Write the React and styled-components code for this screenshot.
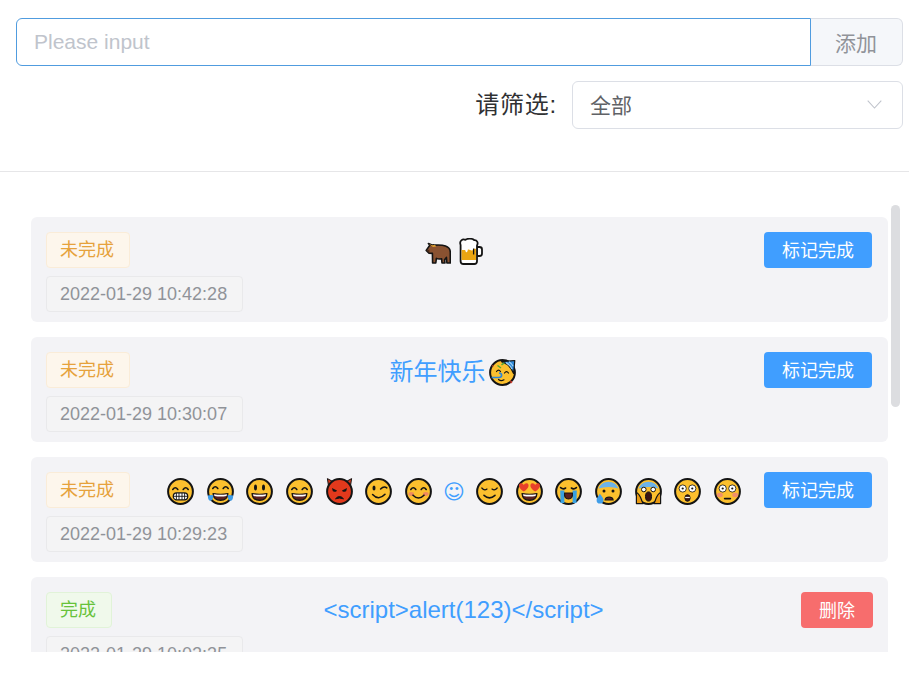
import React from "react";
import styled, { createGlobalStyle } from "styled-components";

const Global = createGlobalStyle`
  html, body { margin: 0; padding: 0; background: #fff; }
  * { box-sizing: border-box; }
  body { font-family: "Liberation Sans", "Noto Sans CJK SC", sans-serif; }
`;

const Page = styled.div`
  width: 909px;
  height: 652px;
  overflow: hidden;
  display: flex;
  flex-direction: column;
`;
const Toolbar = styled.header`
  flex: none;
  padding: 18px 6px 42px 16px;
  border-bottom: 1px solid #e6e6e8;
  height: 172px;
`;
const InputGroup = styled.div`
  display: flex;
  height: 48px;
`;
const TodoInput = styled.input`
  flex: 1;
  min-width: 0;
  height: 48px;
  padding: 0 17px;
  font: 21px "Liberation Sans", "Noto Sans CJK SC", sans-serif;
  color: #606266;
  border: 1px solid #509cdf;
  border-radius: 6px 0 0 6px;
  outline: none;
  &::placeholder { color: #c0c4cc; opacity: 1; }
`;
const Append = styled.button`
  flex: none;
  width: 92px;
  height: 48px;
  padding: 0 1px 0 0;
  font: 21px "Liberation Sans", "Noto Sans CJK SC", sans-serif;
  color: #909399;
  background: #f5f7fa;
  border: 1px solid #dcdfe6;
  border-left: 0;
  border-radius: 0 6px 6px 0;
`;
const FilterRow = styled.div`
  display: flex;
  justify-content: flex-end;
  align-items: center;
  margin-top: 15px;
  height: 48px;
`;
const FilterLabel = styled.label`
  font-size: 24px;
  letter-spacing: 0.75px;
  color: #303133;
  margin-right: 15px;
  padding-bottom: 5px;
`;
const Select = styled.div`
  width: 331px;
  height: 48px;
  padding: 0 21px 3px 17px;
  display: flex;
  align-items: center;
  justify-content: space-between;
  font-size: 21px;
  color: #606266;
  border: 1px solid #dcdfe6;
  border-radius: 6px;
`;
const Caret = styled.svg`
  width: 15px;
  height: 9px;
  flex: none;
  margin: 2px -1px 0 0;
`;
const Scroller = styled.main`
  position: relative;
  flex: 1;
  min-height: 0;
  overflow: hidden;
  padding: 45px 21px 0 31px;
`;
const Thumb = styled.div`
  position: absolute;
  top: 33px;
  left: 891px;
  width: 9px;
  height: 202px;
  border-radius: 5px;
  background: #dcdde0;
`;
const Card = styled.article`
  height: 105px;
  margin-bottom: 15px;
  padding: 15px 16px 10px 15px;
  background: #f3f3f6;
  border-radius: 6px;
`;
const TopLine = styled.div`
  display: flex;
  align-items: flex-start;
  height: 36px;
  margin-bottom: 8px;
`;
const tagColors = {
  warning: ["#fdf6ec", "#faecd8", "#e6a23c"],
  success: ["#f0f9eb", "#e1f3d8", "#67c23a"],
  info: ["#f4f4f5", "#e9e9eb", "#909399"],
};
const Tag = styled.span`
  display: inline-block;
  flex: none;
  height: 36px;
  line-height: 34px;
  padding: 0 15px 0 13px;
  font-size: 18px;
  white-space: nowrap;
  border-radius: 4px;
  border: 1px solid ${(p) => tagColors[p.$kind][1]};
  background: ${(p) => tagColors[p.$kind][0]};
  color: ${(p) => tagColors[p.$kind][2]};
`;
const Content = styled.div`
  flex: 1;
  min-width: 0;
  margin-left: 14px;
  text-align: center;
  font-size: 24px;
  line-height: ${(p) => p.$lineHeight}px;
  color: #409eff;
`;
const Action = styled.button`
  flex: none;
  height: 36px;
  padding: 0 18px 2px;
  font: 18px "Liberation Sans", "Noto Sans CJK SC", sans-serif;
  color: #fff;
  border: 0;
  border-radius: 4px;
  background: ${(p) => (p.$danger ? "#f76d6d" : "#409eff")};
  margin-right: ${(p) => (p.$danger ? "-1px" : "0")};
`;
const EmojiBox = styled.span`
  display: inline-block;
  width: 33px;
  height: 27px;
  vertical-align: middle;
  text-align: center;
  line-height: 0;
  margin-top: -2px;
`;
const EmojiSvg = styled.svg`
  width: 27px;
  height: 27px;
`;
const Smiley = styled.span`
  display: inline-block;
  width: 24.7px;
  text-align: center;
  font-family: "DejaVu Sans", sans-serif;
  font-size: 21px;
`;

const K = "#141414";
const Y = "#fcc02e";
const Face = ({ fill = Y }) => <circle cx="13.5" cy="13.5" r="12.4" fill={fill} stroke={K} strokeWidth="2" />;
const Line = ({ d, w = 1.6 }) => <path d={d} fill="none" stroke={K} strokeWidth={w} strokeLinecap="round" />;
const ArcEyes = () => (
  <>
    <Line d="M5.8 11.5q2.5-3.6 5 0" />
    <Line d="M16.2 11.5q2.5-3.6 5 0" />
  </>
);
const OvalEyes = () => (
  <>
    <ellipse cx="9.5" cy="9.5" rx="1.5" ry="3" fill={K} />
    <ellipse cx="17.5" cy="9.5" rx="1.5" ry="3" fill={K} />
  </>
);
const RoundEyes = () => (
  <>
    <circle cx="8.7" cy="10.5" r="3.6" fill="#fff" stroke={K} strokeWidth=".8" />
    <circle cx="18.3" cy="10.5" r="3.6" fill="#fff" stroke={K} strokeWidth=".8" />
    <circle cx="8.7" cy="10.5" r="1.1" fill={K} />
    <circle cx="18.3" cy="10.5" r="1.1" fill={K} />
  </>
);
const OpenMouth = () => (
  <>
    <path d="M6 15.5Q13.5 17 21 15.5Q20.5 22.3 13.5 22.3Q6.5 22.3 6 15.5Z" fill="#5b1f1f" stroke={K} strokeWidth="1.2" strokeLinejoin="round" />
    <path d="M7 16.3Q13.5 17.4 20 16.3L19.5 18Q13.5 19.2 7.5 18Z" fill="#fff" />
  </>
);
const Blush = () => (
  <>
    <ellipse cx="6.2" cy="16" rx="2.8" ry="1.9" fill="#f08a5d" />
    <ellipse cx="20.8" cy="16" rx="2.8" ry="1.9" fill="#f08a5d" />
  </>
);
const Heart = ({ x }) => (
  <path d={`M${x} 13.4c-6-3.4-5.6-7.8-3-8.2 1.5-.2 2.6.8 3 1.8.4-1 1.5-2 3-1.8 2.6.4 3 4.8-3 8.2z`} fill="#e8402a" />
);
const BlueTop = () => (
  <path d="M3.4 10.5A11 11 0 0 1 23.6 10.5Q13.5 7.5 3.4 10.5Z" fill="#6db3e8" />
);

const drawings = {
  grin: (
    <>
      <Face />
      <ArcEyes />
      <rect x="6.3" y="14.8" width="14.4" height="7" rx="3.4" fill="#fff" stroke={K} strokeWidth="1.3" />
      <path d="M6.5 18.3h14M9.4 15v6.5M12 15v6.8M15 15v6.8M17.6 15v6.5" stroke={K} strokeWidth=".9" />
    </>
  ),
  joy: (
    <>
      <Face />
      <Line d="M5.8 10.5q2.5-3.6 5 0" />
      <Line d="M16.2 10.5q2.5-3.6 5 0" />
      <OpenMouth />
      <path d="M.8 17.5q3.6-.8 5.6-.2-.2 4.6-2.4 5.5-3 .6-3.2-5.3zM26.2 17.5q-3.6-.8-5.6-.2.2 4.6 2.4 5.5 3 .6 3.2-5.3z" fill="#3f9de8" />
    </>
  ),
  smiley: (
    <>
      <Face />
      <OvalEyes />
      <OpenMouth />
    </>
  ),
  smile: (
    <>
      <Face />
      <ArcEyes />
      <OpenMouth />
    </>
  ),
  imp: (
    <>
      <path d="M2.6 8.5L1.4.6 8 4.2zM24.4 8.5L25.6.6 19 4.2z" fill="#d83a1d" stroke={K} strokeWidth="1" strokeLinejoin="round" />
      <Face fill="#e2391c" />
      <path d="M6 10l5 2.4c-.3 1.8-3.7 2-4.4 0zM21 10l-5 2.4c.3 1.8 3.7 2 4.4 0z" fill={K} />
      <path d="M9.5 20.8q4-4.6 8 0q-4-1.4-8 0z" fill={K} stroke={K} strokeWidth="1" strokeLinejoin="round" />
    </>
  ),
  wink: (
    <>
      <Face />
      <ellipse cx="9" cy="10" rx="1.5" ry="2.6" fill={K} />
      <Line d="M15.6 11q3.2-3.2 6.2-1.2" />
      <Line d="M7.6 16.5q6 6.6 12.4-.2" />
    </>
  ),
  blushSmile: (
    <>
      <Face />
      <Blush />
      <ArcEyes />
      <Line d="M8 17.2q5.5 5.6 11 0" />
    </>
  ),
  relieved: (
    <>
      <Face />
      <Line d="M5.8 10q2.5 3 5.2 1" w={1.2} />
      <Line d="M21.2 10q-2.5 3-5.2 1" w={1.2} />
      <Line d="M8 17.4q5.5 4.8 11 0" />
    </>
  ),
  hearts: (
    <>
      <Face />
      <OpenMouth />
      <Heart x={7.8} />
      <Heart x={19.2} />
    </>
  ),
  sob: (
    <>
      <Face />
      <Line d="M5.6 9.6q2.6 2.2 5 .4" />
      <Line d="M21.4 9.6q-2.6 2.2-5 .4" />
      <path d="M5.2 12.4h4.2V25H5.6zM21.8 12.4h-4.2V25h3.8z" fill="#39a0e0" />
      <path d="M9.6 15h7.8q.6 6-3.9 6t-3.9-6z" fill="#5b1f1f" stroke={K} strokeWidth="1.1" />
    </>
  ),
  sweat: (
    <>
      <Face />
      <BlueTop />
      <circle cx="9" cy="13" r="1.5" fill={K} />
      <circle cx="18" cy="13" r="1.5" fill={K} />
      <path d="M10 22c.8-3.8 7.4-3.8 8.2 0z" fill="#5b1f1f" stroke={K} strokeWidth="1.1" strokeLinejoin="round" />
      <path d="M4.8 15.8c2 2.8 3.8 4.2 3.6 6.4a3.4 3.4 0 0 1-6.8 0c0-2 1.6-3.6 3.2-6.4z" fill="#3f9de8" />
    </>
  ),
  scream: (
    <>
      <Face />
      <BlueTop />
      <circle cx="8.8" cy="11.5" r="2.3" fill="#fff" stroke={K} strokeWidth="1" />
      <circle cx="18.2" cy="11.5" r="2.3" fill="#fff" stroke={K} strokeWidth="1" />
      <ellipse cx="13.5" cy="18.5" rx="3" ry="4.6" fill="#3a1512" stroke={K} strokeWidth="1" />
      <path d="M1.4 25.6V14.5c2.2 1 3.8 3.8 5 7l1.5 4.1zM25.6 25.6V14.5c-2.2 1-3.8 3.8-5 7l-1.5 4.1z" fill="#e99a12" stroke={K} strokeWidth="1.2" strokeLinejoin="round" />
    </>
  ),
  astonished: (
    <>
      <Face />
      <RoundEyes />
      <ellipse cx="13.5" cy="20" rx="2.6" ry="3.3" fill="#3a1512" stroke={K} strokeWidth="1" />
      <path d="M11.2 18.9h4.6v1.2h-4.6z" fill="#fff" />
    </>
  ),
  flushed: (
    <>
      <Face />
      <ellipse cx="5.8" cy="17" rx="3" ry="2.2" fill="#f0906a" />
      <ellipse cx="21.2" cy="17" rx="3" ry="2.2" fill="#f0906a" />
      <RoundEyes />
      <Line d="M10.6 20.6h5.8" />
    </>
  ),
  ox: (
    <>
      <path d="M5.8 7.2L4.4 5.5l3.6 1.6q1.5-.8 3 0c4-.2 7-.4 10.5.8 3 1 4.8 3.4 4.8 6.4V25h-3.4l-.5-5.6-1.8 2.3.4 3.3h-3l-.4-4.2c-2 .4-3.8.4-5.2-.4L11.8 25H8.6l-.2-9.6-3.4-.2-2.8-2.8z" fill="#8a5231" stroke={K} strokeWidth="1.6" strokeLinejoin="round" />
      <path d="M5 6l3.2 1.3 3-.2 1 1.5-3.2.4z" fill="#e0a030" />
      <path d="M2.4 12.4l3-1 .2 3.8z" fill="#4b2a18" />
    </>
  ),
  beer: (
    <>
      <path d="M20 9h2.4q2.6 0 2.6 2.4v4.2q0 2.4-2.6 2.4H20z" fill="#fff" stroke={K} strokeWidth="1.8" />
      <path d="M3.6 7C2 2.6 5.6.7 8.4 1.8 10.6.3 15.4.2 17.2 2.2c2.6-.4 4.4 2.4 2.8 5.2v15.8q0 2.8-2.8 2.8H6.4q-2.8 0-2.8-2.8z" fill="#fff" stroke={K} strokeWidth="1.8" strokeLinejoin="round" />
      <path d="M4.6 11.5c1.5 1.400 2.300-.2 3.700.7.500 3 2.300 2.600 2.500-.4 1.900-1 3.500 2 5 .2.600-1.200 1.800-1.200 3.200-1.100v11H4.600z" fill="#eaa512" />
      <path d="M16.6 10.5v6" stroke={K} strokeWidth="1.3" />
    </>
  ),
  party: (
    <>
      <Face />
      <path d="M12.5 2.6L25.800 1.500 24.600 14.500c-2-5.600-6.200-10-12.100-11.900z" fill="#2e88d8" stroke={K} strokeWidth="1.2" strokeLinejoin="round" />
      <path d="M17 3.600q4 2.200 6 6.400M20 2.800q2.800 1.800 4.200 4.400" stroke="#9fd2f5" strokeWidth="1.2" fill="none" />
      <Line d="M7.500 12.500q2-2.800 4 0" w={1.2} />
      <Line d="M15.500 14q2-2.800 4 0" w={1.2} />
      <path d="M2.600 18.500H10q2.600 0 2.600-2.200T10 14" fill="none" stroke="#2e88d8" strokeWidth="1.7" />
      <path d="M9.500 20.500q2.500 2 5.500.3" fill="none" stroke={K} strokeWidth="1.2" strokeLinecap="round" />
      <path d="M8.500 6.500l3.500 2.500M12.500 5.800l2.800-2" stroke="#52a838" strokeWidth="1.5" />
      <path d="M21 21l2.600 2-1.800 1.800zM2.500 7l1.500-1 .8 1.800z" fill="#d8392b" />
    </>
  ),
};

const Emoji = ({ name }) => (
  <EmojiBox>
    <EmojiSvg viewBox="0 0 27 27" role="img" aria-label={name}>
      {drawings[name]}
    </EmojiSvg>
  </EmojiBox>
);

const faces = ["grin", "joy", "smiley", "smile", "imp", "wink", "blushSmile"];
const faces2 = ["relieved", "hearts", "sob", "sweat", "scream", "astonished", "flushed"];

const items = [
  { time: "2022-01-29 10:42:28", lineHeight: 38, body: <><Emoji name="ox" /><Emoji name="beer" /></> },
  { time: "2022-01-29 10:30:07", lineHeight: 40, body: <>新年快乐<Emoji name="party" /></> },
  {
    time: "2022-01-29 10:29:23",
    lineHeight: 38,
    body: (
      <>
        {faces.map((f) => <React.Fragment key={f}><Emoji name={f} />{" "}</React.Fragment>)}
        <Smiley>☺</Smiley>{" "}
        {faces2.map((f) => <React.Fragment key={f}><Emoji name={f} />{" "}</React.Fragment>)}
      </>
    ),
  },
  { time: "2022-01-29 10:02:35", lineHeight: 36, done: true, body: "<script>alert(123)</script>" },
];

export default function App() {
  return (
    <Page>
      <Global />
      <Toolbar>
        <InputGroup>
          <TodoInput placeholder="Please input" />
          <Append>添加</Append>
        </InputGroup>
        <FilterRow>
          <FilterLabel>请筛选:</FilterLabel>
          <Select>
            全部
            <Caret viewBox="0 0 15 9">
              <path d="M.7.7L7.5 8 14.3.7" fill="none" stroke="#c0c4cc" strokeWidth="1.1" />
            </Caret>
          </Select>
        </FilterRow>
      </Toolbar>
      <Scroller>
        {items.map((it) => (
          <Card key={it.time}>
            <TopLine>
              <Tag $kind={it.done ? "success" : "warning"}>{it.done ? "完成" : "未完成"}</Tag>
              <Content $lineHeight={it.lineHeight}>{it.body}</Content>
              <Action $danger={it.done}>{it.done ? "删除" : "标记完成"}</Action>
            </TopLine>
            <Tag $kind="info">{it.time}</Tag>
          </Card>
        ))}
        <Thumb />
      </Scroller>
    </Page>
  );
}
